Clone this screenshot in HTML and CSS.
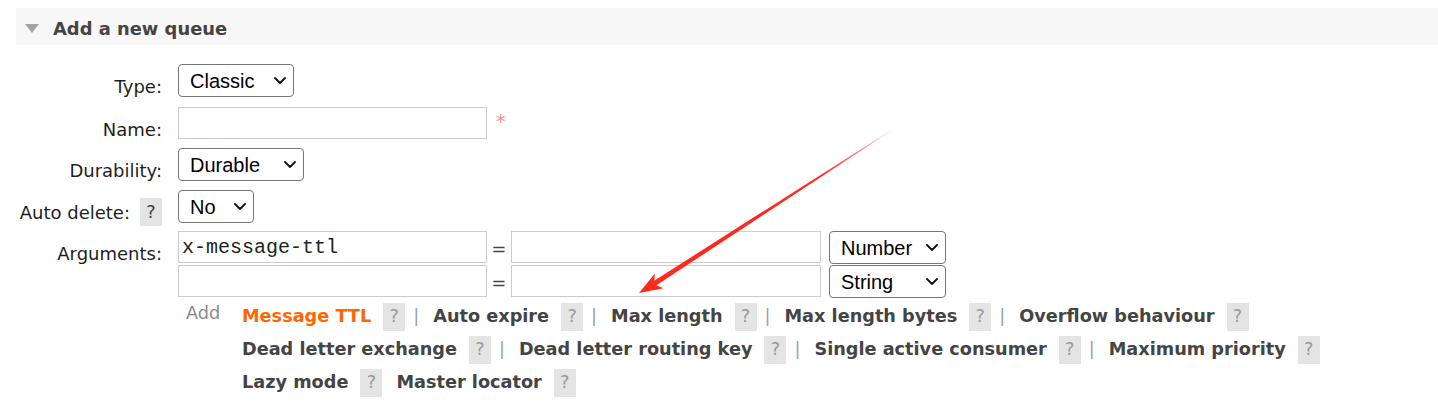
FILE: index.html
```html
<!DOCTYPE html>
<html>
<head>
<meta charset="utf-8">
<title>Add a new queue</title>
<link rel="stylesheet" href="styles.css">
</head>
<body>
<div class="page">
  <div class="section-head">
    <svg class="toggle" width="14" height="9" viewBox="0 0 14 9"><polygon points="0,0 14,0 7,9" fill="#a3a3a3"/></svg>
    <h2 class="title">Add a new queue</h2>
  </div>

  <form class="form">
    <div class="label"><span>Type:</span></div>
    <div class="field">
      <span class="sel-wrap">
        <select class="sel sel-type"><option>Classic</option><option>Quorum</option><option>Stream</option></select>
        <svg class="chev" width="12" height="7" viewBox="0 0 12 7"><path d="M1 1 L6 6 L11 1" fill="none" stroke="#111" stroke-width="1.8" stroke-linecap="round" stroke-linejoin="round"/></svg>
      </span>
    </div>

    <div class="label"><span>Name:</span></div>
    <div class="field">
      <input class="text name-input" type="text">
      <span class="req">*</span>
    </div>

    <div class="label"><span>Durability:</span></div>
    <div class="field">
      <span class="sel-wrap">
        <select class="sel sel-durable"><option>Durable</option><option>Transient</option></select>
        <svg class="chev" width="12" height="7" viewBox="0 0 12 7"><path d="M1 1 L6 6 L11 1" fill="none" stroke="#111" stroke-width="1.8" stroke-linecap="round" stroke-linejoin="round"/></svg>
      </span>
    </div>

    <div class="label"><span>Auto delete:</span><span class="help help-dark">?</span></div>
    <div class="field">
      <span class="sel-wrap">
        <select class="sel sel-auto"><option>No</option><option>Yes</option></select>
        <svg class="chev" width="12" height="7" viewBox="0 0 12 7"><path d="M1 1 L6 6 L11 1" fill="none" stroke="#111" stroke-width="1.8" stroke-linecap="round" stroke-linejoin="round"/></svg>
      </span>
    </div>

    <div class="label"><span>Arguments:</span></div>
    <div class="field args">
      <div class="arg-row">
        <input class="text key" type="text" value="x-message-ttl">
        <span class="eq">=</span>
        <input class="text val" type="text">
        <span class="sel-wrap type-wrap">
          <select class="sel type-sel"><option>Number</option><option>String</option><option>Boolean</option><option>List</option></select>
          <svg class="chev" width="12" height="7" viewBox="0 0 12 7"><path d="M1 1 L6 6 L11 1" fill="none" stroke="#111" stroke-width="1.8" stroke-linecap="round" stroke-linejoin="round"/></svg>
        </span>
      </div>
      <div class="arg-row">
        <input class="text key" type="text">
        <span class="eq">=</span>
        <input class="text val" type="text">
        <span class="sel-wrap type-wrap">
          <select class="sel type-sel"><option>String</option><option>Number</option><option>Boolean</option><option>List</option></select>
          <svg class="chev" width="12" height="7" viewBox="0 0 12 7"><path d="M1 1 L6 6 L11 1" fill="none" stroke="#111" stroke-width="1.8" stroke-linecap="round" stroke-linejoin="round"/></svg>
        </span>
      </div>
    </div>

    <div class="label empty"></div>
    <div class="field add-row">
      <span class="add">Add</span>
      <div class="links">
        <div class="link-row">
          <span class="link active">Message TTL</span><span class="help">?</span><span class="sep">|</span>
          <span class="link">Auto expire</span><span class="help">?</span><span class="sep">|</span>
          <span class="link">Max length</span><span class="help">?</span><span class="sep">|</span>
          <span class="link">Max length bytes</span><span class="help">?</span><span class="sep">|</span>
          <span class="link">Overflow behaviour</span><span class="help">?</span>
        </div>
        <div class="link-row">
          <span class="link">Dead letter exchange</span><span class="help">?</span><span class="sep">|</span>
          <span class="link">Dead letter routing key</span><span class="help">?</span><span class="sep">|</span>
          <span class="link">Single active consumer</span><span class="help">?</span><span class="sep">|</span>
          <span class="link">Maximum priority</span><span class="help">?</span>
        </div>
        <div class="link-row">
          <span class="link">Lazy mode</span><span class="help">?</span>
          <span class="link spaced">Master locator</span><span class="help">?</span>
        </div>
      </div>
    </div>
  </form>
</div>

<svg class="annotation" width="1438" height="413" viewBox="0 0 1438 413">
  <defs>
    <linearGradient id="fade" gradientUnits="userSpaceOnUse" x1="895" y1="128" x2="639" y2="293">
      <stop offset="0" stop-color="#ff2a1f" stop-opacity="0"/>
      <stop offset="0.12" stop-color="#ff2a1f" stop-opacity="0.55"/>
      <stop offset="0.3" stop-color="#ff2a1f" stop-opacity="1"/>
      <stop offset="1" stop-color="#ff2a1f" stop-opacity="1"/>
    </linearGradient>
  </defs>
  <polygon points="895.2,128.3 894.8,127.7 651.8,282.2 654.6,286.4" fill="url(#fade)"/>
  <polygon points="639,293 663.5,288.2 654.1,284.3 654.9,273.6" fill="#ff2a1f"/>
</svg>
</body>
</html>
```

FILE: styles.css
```css
html, body {
  margin: 0;
  padding: 0;
  background: #ffffff;
}

body {
  font-family: "DejaVu Sans", Verdana, sans-serif;
  font-size: 17.7px;
  line-height: 21px;
  color: #222222;
  position: relative;
}

.page {
  padding: 8px 0 0 16px;
}

/* section header */
.section-head {
  height: 37px;
  background: #f7f7f7;
  display: flex;
  align-items: center;
  padding-left: 9px;
}

.toggle {
  display: block;
  margin-top: 3px;
}

.title {
  margin: 3px 0 0 14px;
  font-size: 17.9px;
  font-weight: bold;
  color: #444444;
  line-height: 21px;
}

/* form grid */
.form {
  display: grid;
  grid-template-columns: 146px auto;
  grid-template-rows: 43px 41px 42px 41px 68px 99px;
  column-gap: 16px;
  margin-top: 19px;
}

.label {
  display: flex;
  justify-content: flex-end;
  align-items: center;
  height: 28px;
  margin-top: 8px;
  white-space: nowrap;
  font-size: 18px;
  color: #1e1e1e;
}

.label.empty {
  margin: 0;
}

.field {
  display: flex;
  align-items: flex-start;
}

.help {
  display: inline-flex;
  align-items: center;
  justify-content: center;
  width: 22px;
  height: 28px;
  background: #e4e4e4;
  color: #9a9a9a;
  font-size: 17.7px;
  flex: none;
}

.help-dark {
  margin-left: 10px;
  color: #444444;
}

/* selects */
.sel-wrap {
  position: relative;
  display: inline-block;
  flex: none;
}

.sel {
  -webkit-appearance: none;
  appearance: none;
  box-sizing: border-box;
  display: block;
  font-family: "Liberation Sans", Arial, sans-serif;
  font-size: 20px;
  height: 33px;
  margin: 0;
  padding: 0 0 0 11px;
  color: #000000;
  background: #ffffff;
  border: 1px solid #767676;
  border-radius: 4px;
  outline: none;
}

.chev {
  position: absolute;
  top: 13px;
  right: 8px;
  pointer-events: none;
}

.sel-type { width: 116px; }
.sel-durable { width: 126px; }
.sel-auto { width: 76px; }

/* text inputs */
.text {
  box-sizing: border-box;
  height: 32px;
  margin: 0;
  padding: 0 3px;
  border: 1px solid #cccccc;
  background: #ffffff;
  font-family: "Liberation Mono", "Courier New", monospace;
  font-size: 20px;
  color: #222222;
  outline: none;
}

.name-input { width: 309px; }

.req {
  color: #ff8a8a;
  font-size: 19px;
  line-height: 20px;
  margin: 4px 0 0 9px;
}

/* arguments */
.args {
  flex-direction: column;
}

.arg-row {
  display: flex;
  align-items: flex-start;
  height: 34px;
}

.key { width: 309px; }
.val { width: 310px; }

.eq {
  width: 24px;
  text-align: center;
  line-height: 32px;
  padding-top: 2px;
  color: #444444;
}

.type-wrap {
  margin-left: 8px;
}

.type-sel {
  width: 117px;
}

/* add links */
.add-row {
  align-items: flex-start;
}

.add {
  box-sizing: border-box;
  width: 64px;
  padding-left: 8px;
  margin-top: 4px;
  color: #8a8a8a;
  flex: none;
}

.links {
  display: flex;
  flex-direction: column;
  margin-top: 1px;
}

.link-row {
  display: flex;
  align-items: center;
  height: 33px;
  white-space: nowrap;
}

.link {
  font-weight: bold;
  color: #444444;
}

.link.active {
  color: #ff6600;
}

.link-row .help {
  margin-left: 12px;
}

.link.spaced {
  margin-left: 14px;
}

.sep {
  margin: 0 14px 0 8px;
  color: #9aa0a8;
}

/* annotation overlay */
.annotation {
  position: absolute;
  left: 0;
  top: 0;
  pointer-events: none;
}
```
